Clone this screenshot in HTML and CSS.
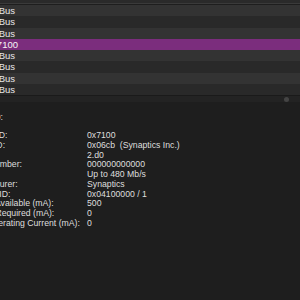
FILE: index.html
```html
<!DOCTYPE html>
<html lang="en">
<head>
    <meta charset="UTF-8">
    <title>System Information</title>
    <link rel="stylesheet" href="styles.css">
</head>
<body>
    <div id="window">
        <div class="tree">
            <div class="tree-top"></div>
            <div class="row"><span class="name">USB 3.1 Bus</span></div>
            <div class="row"><span class="name">USB 3.1 Bus</span></div>
            <div class="row"><span class="name">USB 3.1 Bus</span></div>
            <div class="row selected"><span class="name">Synaptics 0x7100</span></div>
            <div class="row"><span class="name">USB 3.1 Bus</span></div>
            <div class="row"><span class="name">USB 3.1 Bus</span></div>
            <div class="row"><span class="name">USB 3.1 Bus</span></div>
            <div class="row"><span class="name">USB 3.1 Bus</span></div>
        </div>
        <div class="splitter"><span class="thumb"></span></div>
        <div class="details">
            <div class="title"><span>0x7100:</span></div>
            <div class="props">
                <span class="key">Product ID:</span><span>0x7100</span>
                <span class="key">Vendor ID:</span><span>0x06cb&nbsp; (Synaptics Inc.)</span>
                <span class="key">Version:</span><span>2.d0</span>
                <span class="key">Serial Number:</span><span>000000000000</span>
                <span class="key">Speed:</span><span>Up to 480 Mb/s</span>
                <span class="key">Manufacturer:</span><span>Synaptics</span>
                <span class="key">Location ID:</span><span>0x04100000 / 1</span>
                <span class="key">Current Available (mA):</span><span>500</span>
                <span class="key">Current Required (mA):</span><span>0</span>
                <span class="key">Extra Operating Current (mA):</span><span>0</span>
            </div>
        </div>
    </div>
</body>
</html>
```

FILE: styles.css
```css
body {
    margin: 0;
    background-color: #1e1e1e;
    color: #dedede;
    font-family: 'Liberation Sans', Arial, sans-serif;
    overflow: hidden;
}

#window {
    width: 300px;
    height: 300px;
    display: flex;
    flex-direction: column;
}

.tree-top {
    height: 3px;
    background: #2a2a2a;
    border-bottom: 1px solid #3a3a3a;
    margin-bottom: 1px;
}

.row {
    height: 11.25px;
    display: flex;
    align-items: center;
    background: #333333;
    font-size: 9.5px;
    color: #e8e8e8;
}

.row:nth-child(odd) {
    background: #292929;
}

.row.selected {
    background: #7b2d7d;
    color: #f6f6f6;
}

.name {
    width: 15px;
    display: flex;
    justify-content: flex-end;
    white-space: nowrap;
}

.selected .name {
    width: 18px;
}

.splitter {
    position: relative;
    height: 6px;
    border-top: 1px solid #1a1a1a;
    background: #232323;
}

.thumb {
    position: absolute;
    left: 284px;
    top: 1px;
    width: 5px;
    height: 5px;
    border-radius: 50%;
    background: #444;
}

.details {
    padding-top: 10px;
    font-size: 8.7px;
}

.title {
    width: 3px;
    height: 10px;
    line-height: 10px;
    display: flex;
    justify-content: flex-end;
    white-space: nowrap;
    margin-bottom: 9px;
}

.props {
    display: grid;
    grid-template-columns: 123px 1fr;
    margin-left: -36px;
    line-height: 9.75px;
    white-space: nowrap;
}
```
